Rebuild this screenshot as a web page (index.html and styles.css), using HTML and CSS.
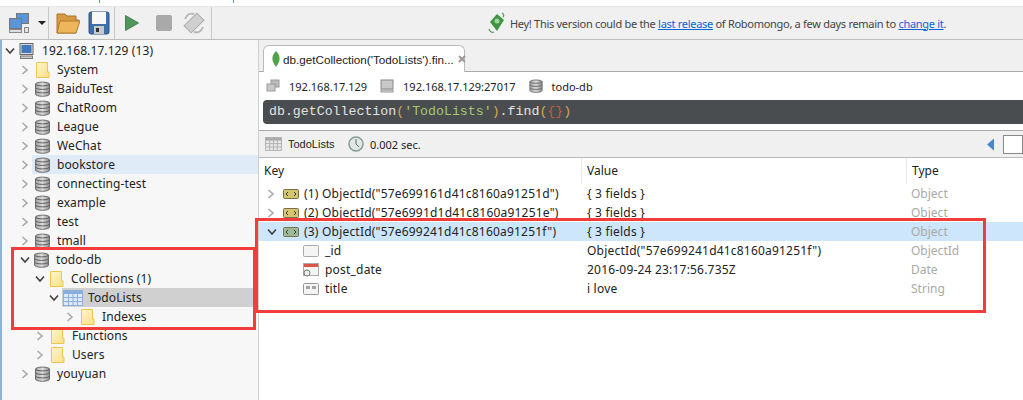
FILE: index.html
```html
<!DOCTYPE html>
<html lang="en">
<head>
<meta charset="utf-8">
<title>Robomongo</title>
<link rel="stylesheet" href="styles.css">
</head>
<body>
<svg class="defs" width="0" height="0">
  <defs>
    <linearGradient id="dbg" x1="0" y1="0" x2="1" y2="0"><stop offset="0" stop-color="#a0a0a0"/><stop offset=".5" stop-color="#dedede"/><stop offset="1" stop-color="#8a8a8a"/></linearGradient>
    <linearGradient id="fold" x1="0" y1="0" x2="1" y2="1"><stop offset="0" stop-color="#fff6cf"/><stop offset="1" stop-color="#fbdf85"/></linearGradient>
    <symbol id="db" viewBox="0 0 15 16">
      <path d="M.5 3C.5 .5 14.500 .5 14.500 3V13C14.500 16 .5 16 .5 13Z" fill="url(#dbg)" stroke="#6f6f6f"/>
      <path d="M.5 3C.5 5.500 14.500 5.500 14.500 3M.5 6.500C.5 9 14.500 9 14.500 6.500M.5 10C.5 12.500 14.500 12.500 14.500 10" fill="none" stroke="#5f5f5f"/>
    </symbol>
    <symbol id="folder" viewBox="0 0 14 16">
      <path d="M1 .5H12V10H13.500V15.500H1Z" fill="url(#fold)" stroke="#eec64f"/>
    </symbol>
    <symbol id="arrow-r" viewBox="0 0 8 10"><path d="M1.500 1 6 5 1.500 9" fill="none" stroke="#a9a9a9" stroke-width="1.600"/></symbol>
    <symbol id="arrow-d" viewBox="0 0 10 8"><path d="M1 1.500 5 6 9 1.500" fill="none" stroke="#444" stroke-width="1.700"/></symbol>
    <symbol id="monitor" viewBox="0 0 14 16">
      <rect x=".5" y=".5" width="13" height="11" fill="#dcdcdc" stroke="#666"/>
      <rect x="2" y="2" width="10" height="8" fill="#3f79c0"/>
      <rect x="1" y="13" width="12" height="2.500" fill="#ccc" stroke="#777"/>
    </symbol>
    <symbol id="grid" viewBox="0 0 20 16">
      <rect x=".5" y=".5" width="19" height="15" fill="#dce9f8" stroke="#8fb0d8"/>
      <rect x=".5" y=".5" width="19" height="3.500" fill="#86aede"/>
      <path d="M.5 7.500H19.500M.5 11.500H19.500M5.500 .5V15.500M10 .5V15.500M14.500 .5V15.500" stroke="#8fb0d8" fill="none"/>
    </symbol>
    <symbol id="bson" viewBox="0 0 16 10">
      <rect x=".5" y=".5" width="15" height="9" rx="1" fill="currentColor" stroke="#77704a"/>
      <path d="M5 3 3 5 5 7M11 3 13 5 11 7" fill="none" stroke="#33401f"/>
    </symbol>
  </defs>
</svg>

<div class="app">
  <div class="strip"><i class="tick"></i><i class="tick"></i></div>
  <header class="toolbar">
    <div class="tgroup tg-conn">
      <svg viewBox="0 0 22 22" width="22" height="22">
        <rect x="8.500" y="1.500" width="12" height="10" fill="#5b94d8" stroke="#777"/>
        <rect x="1.500" y="6.500" width="12" height="10" fill="#5b94d8" stroke="#777"/>
        <rect x="1.500" y="17.500" width="12" height="3" fill="#ddd" stroke="#888"/>
        <rect x="16.500" y="15.500" width="4" height="5" fill="#e4e4e4" stroke="#888"/>
      </svg>
      <span class="caret"></span>
    </div>
    <div class="tgroup tg-file">
      <svg viewBox="0 0 24 24" width="24" height="24">
        <path d="M1 3H9L11 5H20V9H23L20 22H1Z" fill="#d89a40" stroke="#a8742c"/>
        <path d="M4 10H24L20 22H1Z" fill="#edb55c" stroke="#b07c30"/>
      </svg>
      <svg viewBox="0 0 22 24" width="22" height="24">
        <rect x="1" y="1" width="20" height="22" rx="2" fill="#3d6fa8" stroke="#2f5480"/>
        <rect x="4" y="1" width="14" height="12" fill="#f7f7f7"/>
        <rect x="6" y="15" width="10" height="8" fill="#c9c9c9"/>
        <rect x="8" y="17" width="3" height="4" fill="#333"/>
      </svg>
    </div>
    <div class="tgroup tg-run">
      <svg viewBox="0 0 16 18" width="16" height="18"><path d="M1.500 1.500 14.500 9 1.500 16.500Z" fill="#4f9659" stroke="#4a8253"/></svg>
      <span class="stop"></span>
      <svg viewBox="0 0 24 24" width="24" height="24">
        <rect x="3" y="7" width="18" height="10" transform="rotate(-45 12 12)" fill="#cfcfcf" stroke="#aaa"/>
        <path d="M3 8C5 3 9 2 12 3M21 16C19 21 15 22 12 21" fill="none" stroke="#b5b5b5" stroke-width="2"/>
      </svg>
    </div>
    <div class="notice">
      <svg viewBox="0 0 20 22" width="20" height="22">
        <path d="M10 2 17 8 10 19 3 10Z" fill="#3f9443"/>
        <circle cx="10" cy="9" r="2.500" fill="#9fd69f"/>
        <path d="M15 1C17 2 17 4 16 5M2 17C3 20 5 21 7 20" fill="none" stroke="#5a9a5e" stroke-width="1.300"/>
      </svg>
      <span>Hey! This version could be the <a class="link">last release</a> of Robomongo, a few days remain to <a class="link">change it</a>.</span>
    </div>
  </header>

  <div class="workspace">
    <aside class="tree">
      <div class="node root"><svg class="arw-d"><use href="#arrow-d"/></svg><svg class="ic"><use href="#monitor"/></svg><span>192.168.17.129 (13)</span></div>
      <div class="node l1"><svg class="arw-r"><use href="#arrow-r"/></svg><svg class="ic"><use href="#folder"/></svg><span>System</span></div>
      <div class="node l1"><svg class="arw-r"><use href="#arrow-r"/></svg><svg class="ic"><use href="#db"/></svg><span>BaiduTest</span></div>
      <div class="node l1"><svg class="arw-r"><use href="#arrow-r"/></svg><svg class="ic"><use href="#db"/></svg><span>ChatRoom</span></div>
      <div class="node l1"><svg class="arw-r"><use href="#arrow-r"/></svg><svg class="ic"><use href="#db"/></svg><span>League</span></div>
      <div class="node l1"><svg class="arw-r"><use href="#arrow-r"/></svg><svg class="ic"><use href="#db"/></svg><span>WeChat</span></div>
      <div class="node l1 hover"><svg class="arw-r"><use href="#arrow-r"/></svg><svg class="ic"><use href="#db"/></svg><span>bookstore</span></div>
      <div class="node l1"><svg class="arw-r"><use href="#arrow-r"/></svg><svg class="ic"><use href="#db"/></svg><span>connecting-test</span></div>
      <div class="node l1"><svg class="arw-r"><use href="#arrow-r"/></svg><svg class="ic"><use href="#db"/></svg><span>example</span></div>
      <div class="node l1"><svg class="arw-r"><use href="#arrow-r"/></svg><svg class="ic"><use href="#db"/></svg><span>test</span></div>
      <div class="node l1"><svg class="arw-r"><use href="#arrow-r"/></svg><svg class="ic"><use href="#db"/></svg><span>tmall</span></div>
      <div class="node l1"><svg class="arw-d"><use href="#arrow-d"/></svg><svg class="ic"><use href="#db"/></svg><span>todo-db</span></div>
      <div class="node l2"><svg class="arw-d"><use href="#arrow-d"/></svg><svg class="ic"><use href="#folder"/></svg><span>Collections (1)</span></div>
      <div class="node l3 selected"><svg class="arw-d"><use href="#arrow-d"/></svg><svg class="ic ic-grid"><use href="#grid"/></svg><span>TodoLists</span></div>
      <div class="node l4"><svg class="arw-r"><use href="#arrow-r"/></svg><svg class="ic"><use href="#folder"/></svg><span>Indexes</span></div>
      <div class="node l2"><svg class="arw-r"><use href="#arrow-r"/></svg><svg class="ic"><use href="#folder"/></svg><span>Functions</span></div>
      <div class="node l2"><svg class="arw-r"><use href="#arrow-r"/></svg><svg class="ic"><use href="#folder"/></svg><span>Users</span></div>
      <div class="node l1"><svg class="arw-r"><use href="#arrow-r"/></svg><svg class="ic"><use href="#db"/></svg><span>youyuan</span></div>
    </aside>

    <main class="main">
      <div class="tabbar">
        <div class="tab">
          <svg class="leaf" viewBox="0 0 8 16" width="8" height="16"><path d="M4 0C7 3 8 6 7.500 9 7 12 5 14 4 16 3 14 1 12 .5 9 0 6 1 3 4 0Z" fill="#4fa34a"/></svg>
          <span class="tab-title">db.getCollection('TodoLists').fin...</span>
          <svg class="tab-x" viewBox="0 0 8 8" width="8" height="8"><path d="M1 1 7 7M7 1 1 7" fill="none" stroke="#9a9a9a" stroke-width="2"/></svg>
        </div>
      </div>
      <div class="panel">
        <div class="info">
          <span class="info-item"><svg viewBox="0 0 14 14" width="14" height="14"><rect x="5" y="1" width="8" height="7" fill="#bbb" stroke="#999"/><rect x="1" y="5" width="8" height="7" fill="#c8c8c8" stroke="#999"/></svg>192.168.17.129</span>
          <span class="info-item"><svg viewBox="0 0 14 14" width="14" height="14"><rect x="1" y="1" width="12" height="9" fill="#c8c8c8" stroke="#888"/><rect x="1" y="11" width="12" height="2" fill="#ddd" stroke="#999"/></svg>192.168.17.129:27017</span>
          <span class="info-item"><svg width="14" height="14"><use href="#db"/></svg>todo-db</span>
        </div>
        <div class="query">db.getCollection<b class="q-par">(</b><b class="q-str">'TodoLists'</b><b class="q-par">)</b>.find<b class="q-par">(</b><b class="q-br">{}</b><b class="q-par">)</b></div>
      </div>
      <div class="rtoolbar">
        <svg class="grid-gray" width="17" height="14"><use href="#grid"/></svg>
        <span class="r-name">TodoLists</span>
        <svg viewBox="0 0 16 16" width="16" height="16"><circle cx="8" cy="8" r="7" fill="#dfe8e4" stroke="#8a9a94" stroke-width="1.500"/><path d="M8 3V8L11 11" fill="none" stroke="#667"/></svg>
        <span class="r-time">0.002 sec.</span>
        <span class="pager">
          <svg viewBox="0 0 8 14" width="7" height="13"><path d="M8 0V14L0 7Z" fill="#4a86cf"/></svg>
          <span class="page-input"></span>
        </span>
      </div>
      <div class="table">
        <div class="row head"><span class="c-key">Key</span><span class="c-val">Value</span><span class="c-type">Type</span></div>
        <div class="row"><span class="c-key"><svg class="arw-r"><use href="#arrow-r"/></svg><svg class="bson y"><use href="#bson"/></svg>(1) ObjectId("57e699161d41c8160a91251d")</span><span class="c-val">{ 3 fields }</span><span class="c-type">Object</span></div>
        <div class="row"><span class="c-key"><svg class="arw-r"><use href="#arrow-r"/></svg><svg class="bson y"><use href="#bson"/></svg>(2) ObjectId("57e6991d1d41c8160a91251e")</span><span class="c-val">{ 3 fields }</span><span class="c-type">Object</span></div>
        <div class="row sel"><span class="c-key"><svg class="arw-d"><use href="#arrow-d"/></svg><svg class="bson g"><use href="#bson"/></svg>(3) ObjectId("57e699241d41c8160a91251f")</span><span class="c-val">{ 3 fields }</span><span class="c-type">Object</span></div>
        <div class="row"><span class="c-key child"><svg class="fi" viewBox="0 0 16 12"><rect x=".5" y=".5" width="15" height="11" rx="1" fill="#f4f4f4" stroke="#aaa"/></svg>_id</span><span class="c-val">ObjectId("57e699241d41c8160a91251f")</span><span class="c-type">ObjectId</span></div>
        <div class="row"><span class="c-key child"><svg class="fi" viewBox="0 0 16 14"><rect x=".5" y=".5" width="15" height="12" fill="#f4f4f4" stroke="#aaa"/><rect x="1" y="1" width="14" height="3" fill="#d9564c"/><circle cx="4" cy="10" r="3" fill="#eee" stroke="#777"/></svg>post_date</span><span class="c-val">2016-09-24 23:17:56.735Z</span><span class="c-type">Date</span></div>
        <div class="row"><span class="c-key child"><svg class="fi" viewBox="0 0 16 12"><rect x=".5" y=".5" width="15" height="11" rx="1" fill="#f4f4f4" stroke="#999"/><path d="M4 3V6M6 3V6M10 3V6M12 3V6" stroke="#555"/></svg>title</span><span class="c-val">i love</span><span class="c-type">String</span></div>
      </div>
    </main>
  </div>

  <div class="mark mark-left"></div>
  <div class="mark mark-right"></div>
</div>
</body>
</html>
```

FILE: styles.css
```css
* { box-sizing: border-box; }
html, body { margin: 0; padding: 0; }
body { width: 1023px; height: 400px; overflow: hidden; background: #fff; font: 12px/19px "Noto Sans", "Open Sans", sans-serif; color: #222; }
.defs { position: absolute; }
.app { position: relative; width: 1023px; height: 400px; display: flex; flex-direction: column; overflow: hidden; }

.strip { height: 7px; flex: none; background: #fff; border-bottom: 1px solid #e6e6e6; display: flex; gap: 133px; padding-left: 99px; }
.tick { width: 1px; height: 3px; background: #5b8fc7; }

.toolbar { height: 33px; flex: none; display: flex; align-items: center; background: #f0f0f0; border-bottom: 1px solid #bdbdbd; padding-left: 2px; }
.tgroup { height: 100%; display: flex; align-items: center; border-right: 1px solid #c9c9c9; }
.tg-conn { width: 47px; padding-left: 6px; gap: 8px; }
.caret { width: 0; height: 0; border: 4px solid transparent; border-top: 4px solid #222; border-bottom: 0; }
.tg-file { width: 66px; padding-left: 7px; gap: 8px; }
.tg-run { width: 97px; padding-left: 9px; }
.stop { width: 16px; height: 16px; background: #a9a9a9; border-radius: 2px; margin: 0 10px 0 16px; }
.notice { display: flex; align-items: center; gap: 3px; margin-left: 275px; font: 11px/19px "Noto Sans", sans-serif; color: #444; white-space: nowrap; letter-spacing: -.29px; }
.link { color: #0b63d8; text-decoration: underline; }

.workspace { flex: 1; display: flex; min-height: 0; }
.tree { width: 259px; flex: none; background: #f7f7f7; border-left: 2px solid #8fb2d6; border-right: 1px solid #cfcfcf; padding-top: 1px; overflow: hidden; letter-spacing: .1px; }
.node { height: 19px; display: flex; align-items: center; padding-left: 4px; white-space: nowrap; color: #222; }
.node.root span { margin-left: 1px; }
.node.l1 { padding-left: 19px; }
.node.l2 { padding-left: 34px; }
.node.l3 { padding-left: 48px; }
.node.l4 { padding-left: 64px; }
.node.hover { background: linear-gradient(#dfebf6, #dfebf6) no-repeat 30px 0 / 100% 100%; }
.node.selected { background: linear-gradient(#d0d0d0, #d0d0d0) no-repeat 60px 0 / 100% 100%; }
.arw-r { width: 8px; height: 10px; margin-right: 6px; flex: none; }
.arw-d { width: 10px; height: 8px; margin-right: 4px; margin-left: -1px; flex: none; }
.ic { width: 15px; height: 16px; flex: none; margin-right: 7px; }
.ic-grid { width: 20px; margin-right: 5px; }

.main { flex: 1; min-width: 0; background: #fff; display: flex; flex-direction: column; }
.tabbar { height: 32px; flex: none; padding: 5px 0 0 4px; background: #f0f0f0; border-bottom: 1px solid #aaa; }
.tab { width: 202px; height: 27px; display: flex; align-items: center; gap: 3px; padding-left: 8px; background: #fff; border: 1px solid #bbb; border-bottom: 0; border-radius: 6px 6px 0 0; white-space: nowrap; font: 11.700px/19px "Liberation Sans", sans-serif; }
.leaf { flex: none; }
.tab-title { flex: none; }
.tab-x { flex: none; margin-left: 1px; }
.panel { flex: none; background: #fff; border-bottom: 1px solid #aaa; height: 59px; }
.info { height: 28px; display: flex; align-items: center; padding-left: 7px; font-size: 11px; }
.info-item { display: flex; align-items: center; gap: 9px; margin-right: 13px; }
.query { height: 24px; margin-left: 4px; background: #4a4d50; border-radius: 4px 0 0 4px; color: #e3e3e3; padding-left: 6px; font: 13.250px/24px "Liberation Mono", monospace; white-space: nowrap; }
.query b { font-weight: normal; }
.q-str { color: #a9c66f; }
.q-par { color: #d7a94a; }
.q-br { color: #c9593c; }
.rtoolbar { height: 27px; flex: none; display: flex; align-items: center; padding-left: 6px; background: #f0f0f0; border-bottom: 1px solid #bbb; font-size: 11px; }
.grid-gray { filter: grayscale(1); }
.r-name { width: 60px; margin-left: 6px; font-family: "Liberation Sans", sans-serif; }
.r-time { margin-left: 6px; }
.pager { margin-left: auto; display: flex; align-items: center; gap: 9px; }
.page-input { width: 20px; height: 19px; background: #fff; border: 1px solid #888; }

.table { flex: 1; background: #fff; letter-spacing: .2px; }
.row { display: flex; height: 19px; align-items: center; white-space: nowrap; }
.row.head { height: 26px; letter-spacing: 0; }
.row.sel { background: #cde6fb; }
.c-key { width: 323px; flex: none; padding-left: 8px; display: flex; align-items: center; }
.c-val { width: 325px; flex: none; padding-left: 5px; }
.c-type { flex: 1; padding-left: 4px; color: #a9a9a9; letter-spacing: 0; }
.head span { height: 100%; line-height: 26px; color: #222; border-right: 1px solid #e8e8e8; padding-left: 5px; }
.head .c-key { display: block; }
.head .c-type { border-right: 0; }
.bson { width: 16px; height: 10px; margin-right: 5px; flex: none; }
.bson.y { color: #d6c56f; }
.bson.g { color: #9dbb9a; }
.row .arw-d { margin-right: 6px; margin-left: 0; }
.row .arw-r { margin-right: 8px; }
.c-key.child { padding-left: 44px; }
.fi { width: 16px; height: 14px; margin-right: 6px; flex: none; }

.mark { position: absolute; border: 3px solid #f33c3c; pointer-events: none; }
.mark-left { left: 11px; top: 247px; width: 245px; height: 83px; }
.mark-right { left: 255px; top: 218px; width: 731px; height: 95px; }
```
